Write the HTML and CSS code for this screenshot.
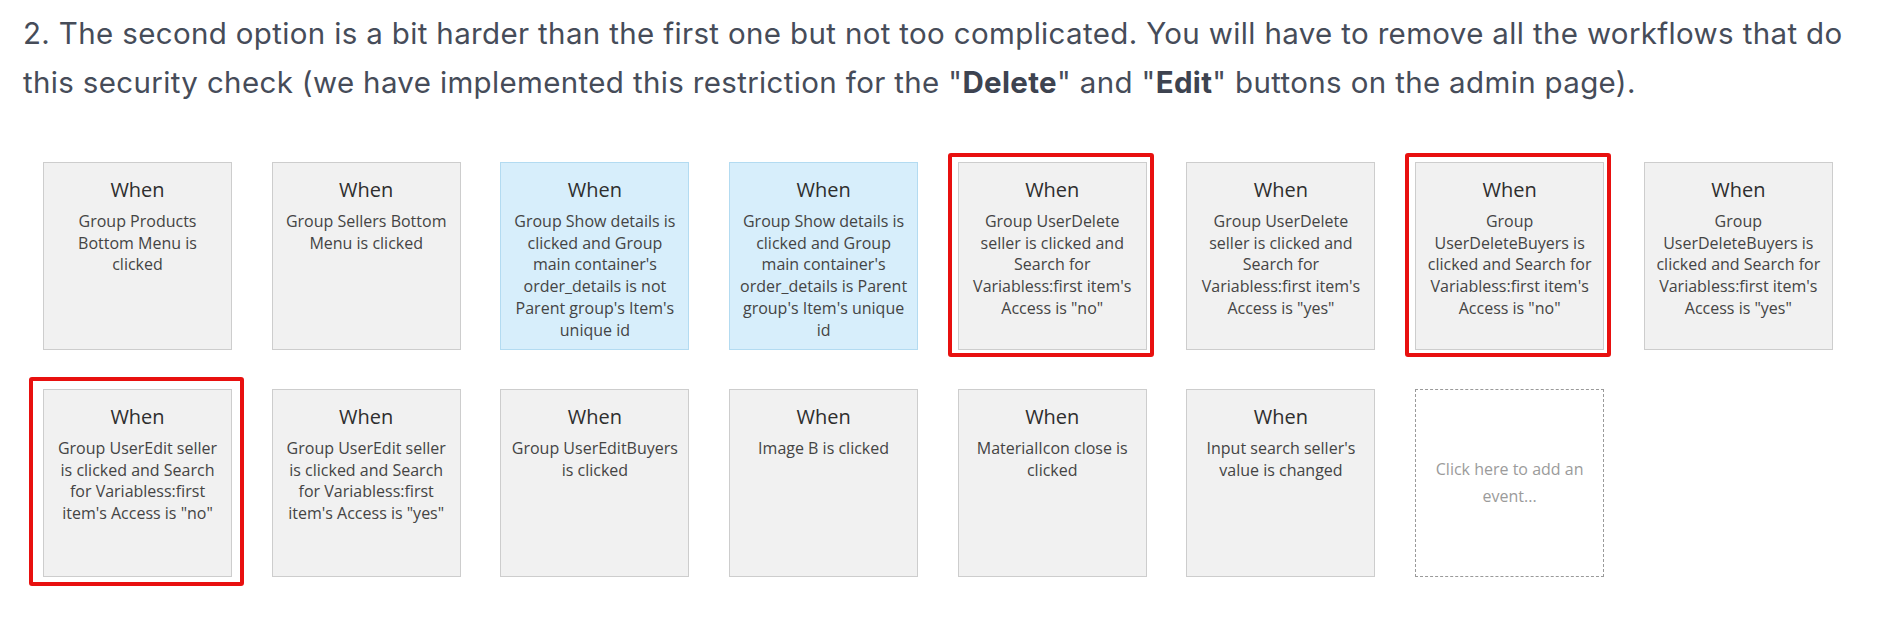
FILE: index.html
```html
<!DOCTYPE html>
<html lang="en">
<head>
    <meta charset="UTF-8">
    <title>Workflow events</title>
    <link rel="stylesheet" href="styles.css">
</head>
<body>
    <div class="post">
        <p class="intro">
            2. The second option is a bit harder than the first one but not too complicated. You will have to remove all the workflows that do
            this security check (we have implemented this restriction for the "<strong>Delete</strong>" and "<strong>Edit</strong>" buttons on the admin page).
        </p>

        <div class="events">
            <div class="event">
                <div class="when">When</div>
                <div class="cond">Group Products Bottom Menu is clicked</div>
            </div>
            <div class="event">
                <div class="when">When</div>
                <div class="cond">Group Sellers Bottom Menu is clicked</div>
            </div>
            <div class="event blue">
                <div class="when">When</div>
                <div class="cond">Group Show details is clicked and Group main container's order_details is not Parent group's Item's unique id</div>
            </div>
            <div class="event blue">
                <div class="when">When</div>
                <div class="cond">Group Show details is clicked and Group main container's order_details is Parent group's Item's unique id</div>
            </div>
            <div class="event marked">
                <div class="when">When</div>
                <div class="cond">Group UserDelete seller is clicked and Search for Variabless:first item's Access is "no"</div>
            </div>
            <div class="event">
                <div class="when">When</div>
                <div class="cond">Group UserDelete seller is clicked and Search for Variabless:first item's Access is "yes"</div>
            </div>
            <div class="event marked">
                <div class="when">When</div>
                <div class="cond">Group UserDeleteBuyers is clicked and Search for Variabless:first item's Access is "no"</div>
            </div>
            <div class="event">
                <div class="when">When</div>
                <div class="cond">Group UserDeleteBuyers is clicked and Search for Variabless:first item's Access is "yes"</div>
            </div>

            <div class="event marked wide">
                <div class="when">When</div>
                <div class="cond">Group UserEdit seller is clicked and Search for Variabless:first item's Access is "no"</div>
            </div>
            <div class="event">
                <div class="when">When</div>
                <div class="cond">Group UserEdit seller is clicked and Search for Variabless:first item's Access is "yes"</div>
            </div>
            <div class="event">
                <div class="when">When</div>
                <div class="cond">Group UserEditBuyers is clicked</div>
            </div>
            <div class="event">
                <div class="when">When</div>
                <div class="cond">Image B is clicked</div>
            </div>
            <div class="event">
                <div class="when">When</div>
                <div class="cond">MaterialIcon close is clicked</div>
            </div>
            <div class="event">
                <div class="when">When</div>
                <div class="cond">Input search seller's value is changed</div>
            </div>
            <div class="event add">Click here to add an event...</div>
        </div>
    </div>
</body>
</html>
```

FILE: styles.css
```css
body {
    margin: 0;
    background: #ffffff;
    font-family: 'Inter', 'Liberation Sans', sans-serif;
}

.post {
    padding: 9px 36px 40px 23px;
}

.intro {
    margin: 0;
    font-size: 29.5px;
    letter-spacing: 0.35px;
    line-height: 49px;
    color: #464c59;
}

.intro strong {
    font-weight: 700;
    color: #3d4350;
}

.events {
    display: grid;
    grid-template-columns: repeat(8, 189px);
    grid-auto-rows: 188px;
    column-gap: 39.7px;
    row-gap: 39px;
    margin: 55px 0 0 20px;
}

.event {
    position: relative;
    box-sizing: border-box;
    background: #f1f1f1;
    border: 1px solid #cdcdcd;
    padding: 12px 9.5px 0;
    text-align: center;
    font-family: 'Open Sans', sans-serif;
    color: #3a3a3a;
}

.event.blue {
    background: #d7eefb;
    border-color: #b3dbf1;
}

/* red annotation drawn over the screenshot */
.event.marked::after {
    content: "";
    position: absolute;
    top: -10px;
    right: -8px;
    bottom: -8px;
    left: -11px;
    border: 4px solid #e8100f;
    border-radius: 3px;
}

.event.marked.wide::after {
    top: -13px;
    right: -13px;
    bottom: -10px;
    left: -15px;
}

.when {
    font-size: 20px;
    line-height: 30px;
    color: #2e2e2e;
}

.cond {
    margin-top: 6px;
    font-size: 16px;
    line-height: 21.7px;
    color: #444444;
}

.event.add {
    display: flex;
    align-items: center;
    justify-content: center;
    padding: 0 18px;
    background: #ffffff;
    border: 1px dashed #9a9a9a;
    font-size: 16px;
    line-height: 27px;
    color: #9b9b9b;
}
```
